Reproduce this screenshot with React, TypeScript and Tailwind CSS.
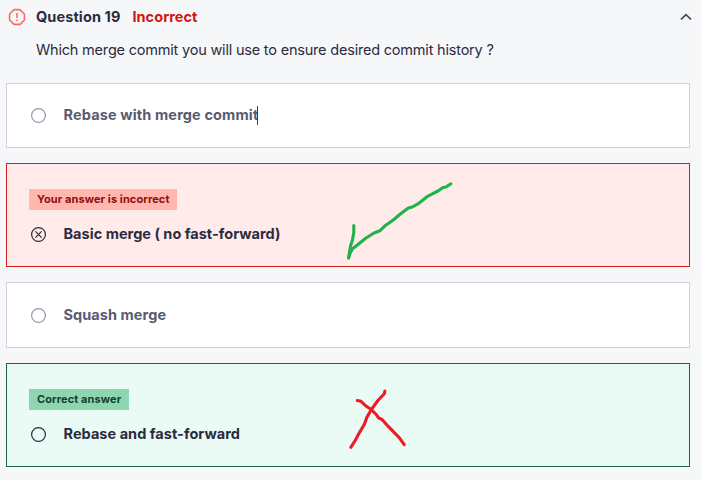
import type { ReactNode } from "react";

type Mark = "empty" | "cross";

function Radio({ mark, className }: { mark: Mark; className: string }) {
  return (
    <svg viewBox="0 0 15 15" fill="none" stroke="currentColor" className={`h-[15px] w-[15px] shrink-0 ${className}`}>
      <circle cx="7.5" cy="7.5" r="6.9" strokeWidth="1.2" />
      {mark === "cross" && <path d="M4.4 4.4l6.2 6.2M10.6 4.4l-6.2 6.2" strokeWidth="1.2" />}
    </svg>
  );
}

function Answer({ mark, radioClass, textClass, children }: { mark: Mark; radioClass: string; textClass: string; children: ReactNode }) {
  return (
    <div className="flex h-5 items-center gap-[17.5px]">
      <Radio mark={mark} className={radioClass} />
      <span className={`whitespace-nowrap text-[14.5px] font-bold ${textClass}`}>{children}</span>
    </div>
  );
}

export default function App() {
  return (
    <main className="relative h-[480px] w-[702px] overflow-hidden bg-[#f6f7f9] pl-1.5 pr-3 font-['Inter',sans-serif] text-[#2a2b3f]">
      <header className="flex h-[33px] items-center pl-[2px]">
        <svg viewBox="0 0 18 18" fill="none" stroke="#fa6b63" className="h-[18px] w-[18px]">
          <path d="M6 1.6h6L16.4 6v6L12 16.4H6L1.6 12V6z" strokeWidth="1.6" strokeLinejoin="round" />
          <path d="M9 5v5M9 11.6v1.5" strokeWidth="1.6" />
        </svg>
        <h1 className="ml-[10px] whitespace-nowrap text-[14.5px] leading-5 font-bold tracking-[0.1px]">Question 19</h1>
        <span className="ml-3 text-[14.5px] leading-5 font-bold tracking-[0.05px] text-[#d31510]">Incorrect</span>
        <svg viewBox="0 0 12 8" fill="none" stroke="#47465b" className="mr-[-2px] ml-auto h-2 w-3">
          <path d="M1 6.4l5-4.8 5 4.8" strokeWidth="1.6" />
        </svg>
      </header>
      <p className="ml-[30px] mt-[6px] h-[22px] whitespace-nowrap text-[14.5px] leading-[22px] tracking-[-0.2px]">
        Which merge commit you will use to ensure desired commit history ?
      </p>
      <div className="mt-[22px] flex flex-col gap-[15px]">
        <section className="flex h-[65px] items-center border border-[#cfd1dd] bg-white pl-6">
          <Answer mark="empty" radioClass="text-[#9596b0]" textClass="text-[#595a71] leading-5 pb-[2px] tracking-[0.13px]">
            Rebase with merge commit<span className="relative"><i className="absolute left-[-1px] top-0 h-[19px] w-px bg-[#3c3d50]" /></span>
          </Answer>
        </section>
        <section className="h-[104px] border border-[#d31f18] bg-[#ffecea] pl-[22px] pt-[25px]">
          <div className="flex h-[21px] w-[148px] items-center bg-[#ffb7b0] pl-2">
            <span className="whitespace-nowrap pb-px text-[11px] leading-4 font-bold tracking-[0.09px] text-[#910d0b]">Your answer is incorrect</span>
          </div>
          <div className="ml-[2px] mt-[14px]">
            <Answer mark="cross" radioClass="text-[#2a2b3f]" textClass="leading-5 tracking-[0.02px]">Basic merge ( no fast-forward)</Answer>
          </div>
        </section>
        <section className="flex h-[66px] items-center border border-[#cfd1dd] bg-white pl-6">
          <Answer mark="empty" radioClass="text-[#9596b0]" textClass="text-[#595a71] leading-5 tracking-[0.06px]">Squash merge</Answer>
        </section>
        <section className="h-[104px] border border-[#206344] bg-[#eafaf5] pl-[22px] pt-[25px]">
          <div className="flex h-[21px] w-[100px] items-center bg-[#8dd6b0] pl-2">
            <span className="whitespace-nowrap pb-px text-[11px] leading-4 font-bold tracking-[0.09px] text-[#153f2d]">Correct answer</span>
          </div>
          <div className="ml-[2px] mt-[14px]">
            <Answer mark="empty" radioClass="text-[#2a2b3f]" textClass="leading-5 tracking-[0.04px]">Rebase and fast-forward</Answer>
          </div>
        </section>
      </div>
      <svg viewBox="0 0 702 480" fill="none" strokeWidth="3.1" strokeLinecap="round" strokeLinejoin="round" className="pointer-events-none absolute left-0 top-0 h-[480px] w-[702px]">
        <g stroke="#22b14c">
          <path d="M450.8 183.8L446 187L443 187.5L438 191L427 196.7L418.3 203.7L412.3 207L408.3 208L400 214.3L393.3 220L385 225.8L380 230.7L374 233L366 238L358.3 244.2L352.5 248.7L350.2 253L348.6 258" />
          <path d="M353.8 225.5L353.8 232.7L352.3 240.7L350.5 246L349.5 252L348.6 258" />
        </g>
        <g stroke="#ed1c24">
          <path d="M384.9 391L384.3 393.7L378.3 400L371.3 409.7L366.9 417.3L364.5 424L358.5 434.3L355.5 440L350.8 447.3" />
          <path d="M357.3 400.5L361 401.3L365.9 406L371.3 409.5L376.7 415L378.5 417.8L382 419.5L388.5 426.7L399.2 437.7L404.2 444.7" />
        </g>
      </svg>
    </main>
  );
}
